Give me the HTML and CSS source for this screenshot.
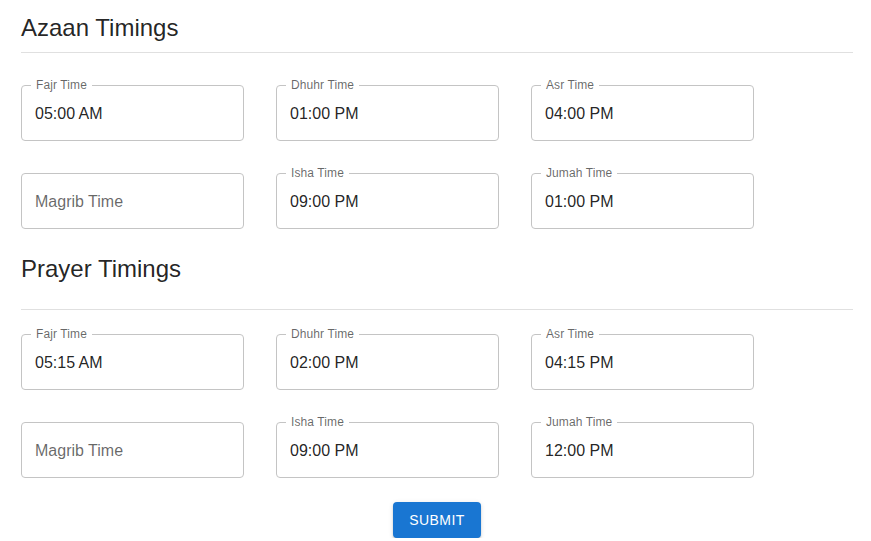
FILE: index.html
```html
<!DOCTYPE html>
<html>
<head>
<meta charset="utf-8">
<link rel="stylesheet" href="styles.css">
</head>
<body>
<div class="page">
  <h2 class="title first">Azaan Timings</h2>
  <hr class="divider">
  <div class="grid">
    <div class="field"><span class="label">Fajr Time</span><span class="value">05:00 AM</span></div>
    <div class="field"><span class="label">Dhuhr Time</span><span class="value">01:00 PM</span></div>
    <div class="field"><span class="label">Asr Time</span><span class="value">04:00 PM</span></div>
    <div class="field"><span class="placeholder">Magrib Time</span></div>
    <div class="field"><span class="label">Isha Time</span><span class="value">09:00 PM</span></div>
    <div class="field"><span class="label">Jumah Time</span><span class="value">01:00 PM</span></div>
  </div>
  <h2 class="title second">Prayer Timings</h2>
  <hr class="divider divider2">
  <div class="grid">
    <div class="field"><span class="label">Fajr Time</span><span class="value">05:15 AM</span></div>
    <div class="field"><span class="label">Dhuhr Time</span><span class="value">02:00 PM</span></div>
    <div class="field"><span class="label">Asr Time</span><span class="value">04:15 PM</span></div>
    <div class="field"><span class="placeholder">Magrib Time</span></div>
    <div class="field"><span class="label">Isha Time</span><span class="value">09:00 PM</span></div>
    <div class="field"><span class="label">Jumah Time</span><span class="value">12:00 PM</span></div>
  </div>
  <div class="actions">
    <button class="submit">SUBMIT</button>
  </div>
</div>
</body>
</html>
```
FILE: styles.css
```css
* { box-sizing: border-box; }
html, body {
  margin: 0;
  padding: 0;
  background: #fff;
  font-family: "Liberation Sans", Arial, sans-serif;
  color: rgba(0,0,0,0.87);
}
.page {
  width: 832px;
  margin-left: 21px;
}
.title {
  margin: 0;
  font-size: 24px;
  font-weight: 400;
  line-height: 32px;
  color: rgba(0,0,0,0.87);
}
.title.first { padding-top: 12px; }
.title.second { margin-top: 24px; }
.divider {
  margin: 8px 0 32px;
  border: 0;
  border-top: 1px solid #e0e0e0;
  height: 0;
}
.divider2 { margin: 24px 0 24px; }
.grid {
  display: grid;
  grid-template-columns: repeat(3, 223px);
  column-gap: 32px;
  row-gap: 32px;
}
.field {
  position: relative;
  height: 56px;
  border: 1px solid #c4c4c4;
  border-radius: 4px;
  display: flex;
  align-items: center;
  padding: 1px 13px 0;
}
.label {
  position: absolute;
  left: 9px;
  top: -8px;
  padding: 0 5px;
  background: #fff;
  font-size: 12px;
  line-height: 14px;
  color: rgba(0,0,0,0.6);
  letter-spacing: 0.1px;
}
.value {
  font-size: 16px;
  color: rgba(0,0,0,0.87);
}
.placeholder {
  font-size: 16px;
  color: rgba(0,0,0,0.6);
}
.actions {
  display: flex;
  justify-content: center;
  margin-top: 24px;
}
.submit {
  width: 88px;
  height: 36px;
  border: 0;
  border-radius: 4px;
  background: #1976d2;
  color: #fff;
  font-family: "Liberation Sans", Arial, sans-serif;
  font-size: 14px;
  font-weight: 400;
  letter-spacing: 0.4px;
  box-shadow: 0 3px 1px -2px rgba(0,0,0,0.2), 0 2px 2px 0 rgba(0,0,0,0.14), 0 1px 5px 0 rgba(0,0,0,0.12);
  cursor: pointer;
}
```
